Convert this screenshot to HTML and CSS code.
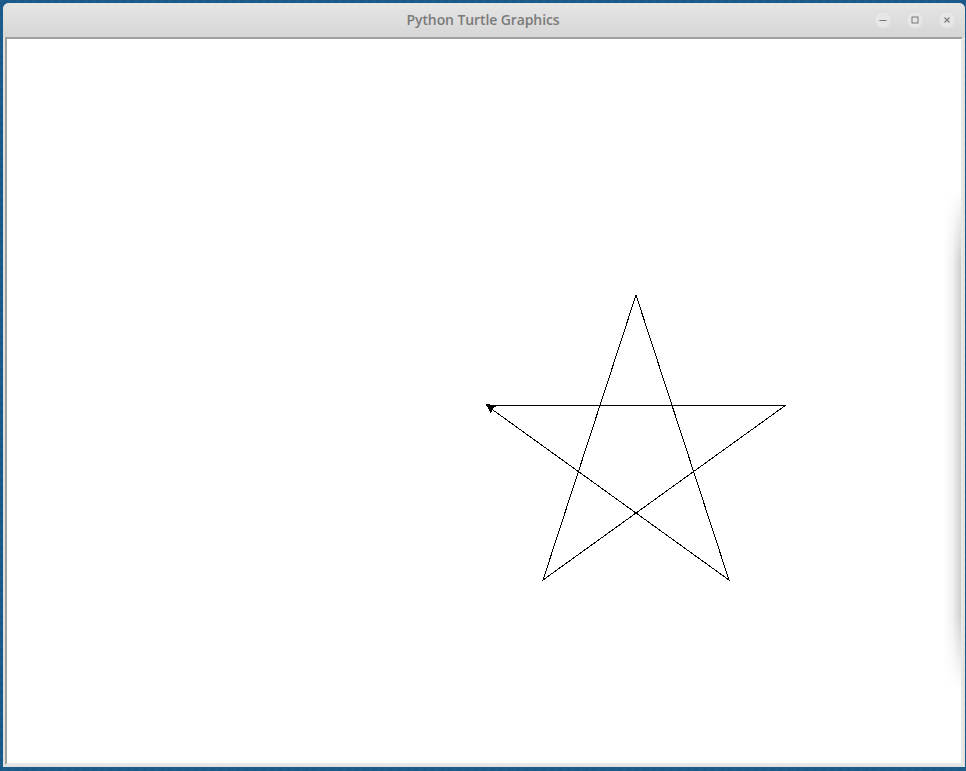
FILE: index.html
```html
<!DOCTYPE html>
<html lang="en">
<head>
<meta charset="utf-8">
<title>Python Turtle Graphics</title>
<link rel="stylesheet" href="styles.css">
</head>
<body>
<div class="window">
  <div class="titlebar">
    <div class="title">Python Turtle Graphics</div>
    <div class="controls">
      <span class="btn"><svg width="16" height="16" viewBox="0 0 16 16"><line x1="4.5" y1="8.5" x2="11.5" y2="8.5" stroke="#777" stroke-width="1"/></svg></span>
      <span class="btn"><svg width="16" height="16" viewBox="0 0 16 16"><rect x="5" y="5" width="6" height="6" fill="none" stroke="#777" stroke-width="1"/></svg></span>
      <span class="btn"><svg width="16" height="16" viewBox="0 0 16 16"><path d="M5.5 5.5 L10.5 10.5 M10.5 5.5 L5.5 10.5" stroke="#777" stroke-width="1.1"/></svg></span>
    </div>
  </div>
  <div class="body">
    <div class="canvas">
      <svg class="drawing" viewBox="7 39 954 724" width="954" height="724">
        <polyline points="486,405 786,405 543,580 636,295 729,580 486,405" fill="none" stroke="#000" stroke-width="1"/>
        <polygon points="486,404 497,405.5 492.5,409 491,414" fill="#000"/>
      </svg>
      <div class="shadow"></div>
    </div>
  </div>
</div>
</body>
</html>
```

FILE: styles.css
```css
html, body {
  margin: 0;
  padding: 0;
}
body {
  width: 966px;
  height: 771px;
  overflow: hidden;
  background: repeating-linear-gradient(135deg, #1c5d8d 0 3px, #1a5987 3px 6px);
}
.window {
  margin: 3px 0 0 3px;
  width: 962px;
  height: 764px;
  background: #e2e2e2;
  border-radius: 6px 6px 0 0;
  display: flex;
  flex-direction: column;
}
.titlebar {
  height: 34px;
  flex: none;
  border-radius: 6px 6px 0 0;
  background: linear-gradient(#e5e5e5, #d6d6d6);
  display: flex;
  align-items: center;
  justify-content: center;
  position: relative;
}
.title {
  font-family: "Open Sans", "DejaVu Sans", sans-serif;
  font-weight: 600;
  font-size: 14px;
  color: #7b7b7b;
  letter-spacing: -0.1px;
  margin-left: -2px;
  margin-top: -1px;
}
.controls {
  position: absolute;
  right: 10px;
  top: 9px;
  display: flex;
  gap: 16px;
}
.btn {
  width: 16px;
  height: 16px;
  border-radius: 50%;
  background: #e6e6e6;
  box-shadow: 0 0 0 1px #dadada;
  display: block;
}
.btn svg {
  display: block;
}
.body {
  flex: 1;
  padding: 0 2px 2px 2px;
  display: flex;
}
.canvas {
  flex: 1;
  position: relative;
  background: #fff;
  border-style: solid;
  border-width: 2px;
  border-color: #a0a0a0 #e8e8e8 #e8e8e8 #a0a0a0;
  overflow: hidden;
}
.drawing {
  display: block;
  shape-rendering: crispEdges;
}
.shadow {
  position: absolute;
  right: 0;
  top: 150px;
  width: 18px;
  height: 500px;
  background: linear-gradient(to right, rgba(0,0,0,0), rgba(0,0,0,0.06) 55%, rgba(0,0,0,0.2));
  -webkit-mask-image: linear-gradient(to bottom, transparent, #000 15%, #000 85%, transparent);
  mask-image: linear-gradient(to bottom, transparent, #000 15%, #000 85%, transparent);
}
```
